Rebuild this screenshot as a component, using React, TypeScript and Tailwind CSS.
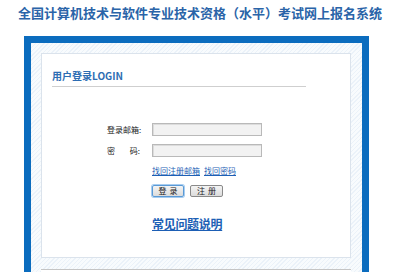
import React from 'react';

const cjk = '"Noto Sans CJK SC", "Liberation Sans", sans-serif';

export default function App() {
  return (
    <div
      className="w-[400px] h-[272px] overflow-hidden bg-white"
      style={{ fontFamily: cjk }}
    >
      <h1 className="pt-[4px] text-center text-[13px] font-bold leading-[17px] text-[#2a64a8]">
        全国计算机技术与软件专业技术资格（水平）考试网上报名系统
      </h1>

      <div className="mt-[15px] ml-[24px] w-[345px] border-[7px] border-b-0 border-[#0b6cbe] pt-[10px] pl-[10px] pr-[11px] bg-[repeating-linear-gradient(135deg,#ebf2f9_0px,#ebf2f9_1px,#f8fbfd_1px,#f8fbfd_3px)]">
        <div className="h-[205px] border border-[#dbe3ec] bg-white">
          <div className="ml-[10px] w-[254px] border-b border-[#cfcfcf] pt-[15px] pb-[3px]">
            <h2 className="text-[10px] font-bold leading-[14px] text-[#2d6db3]">
              用户登录LOGIN
            </h2>
          </div>

          <form className="text-[8px] leading-[12px] text-[#222]">
            <div className="mt-[36px] flex items-center">
              <label className="ml-[65px] w-[35px]">登录邮箱:</label>
              <input
                type="text"
                className="ml-[10px] w-[110px] h-[13px] border border-[#b9b9b9] bg-[#f2f2f2] outline-none shadow-[inset_1px_1px_0_#dcdcdc]"
              />
            </div>
            <div className="mt-[8px] flex items-center">
              <label className="ml-[65px] w-[35px] flex justify-between pr-[2px]">
                <span>密</span>
                <span>码:</span>
              </label>
              <input
                type="password"
                className="ml-[10px] w-[110px] h-[13px] border border-[#b9b9b9] bg-[#f2f2f2] outline-none shadow-[inset_1px_1px_0_#dcdcdc]"
              />
            </div>

            <div className="mt-[8px] pl-[110px] flex gap-[4px] text-[8px] leading-[12px]">
              <a href="#" className="text-[#1d5fb5] underline">找回注册邮箱</a>
              <a href="#" className="text-[#1d5fb5] underline">找回密码</a>
            </div>

            <div className="mt-[8px] pl-[110px] flex gap-[6px]">
              <button
                type="button"
                className="w-[32px] h-[12px] rounded-[2px] border border-[#5a9ad6] bg-[linear-gradient(#f4f4f4,#dcdcdc)] text-[8px] leading-[10px] text-[#222] tracking-[3px] pl-[3px] shadow-[0_0_0_1px_#a8cdf0]"
              >
                登录
              </button>
              <button
                type="button"
                className="w-[33px] h-[12px] rounded-[2px] border border-[#8a8a8a] bg-[linear-gradient(#f4f4f4,#dcdcdc)] text-[8px] leading-[10px] text-[#222] tracking-[3px] pl-[3px]"
              >
                注册
              </button>
            </div>

            <div className="mt-[19px] pl-[110px]">
              <a href="#" className="text-[12px] leading-[16px] font-bold tracking-[-0.3px] text-[#1d5fb5] underline">
                常见问题说明
              </a>
            </div>
          </form>
        </div>

        <div className="mt-[11px] h-[20px] border-t border-[#c5c5c5] bg-white" />
      </div>
    </div>
  );
}
